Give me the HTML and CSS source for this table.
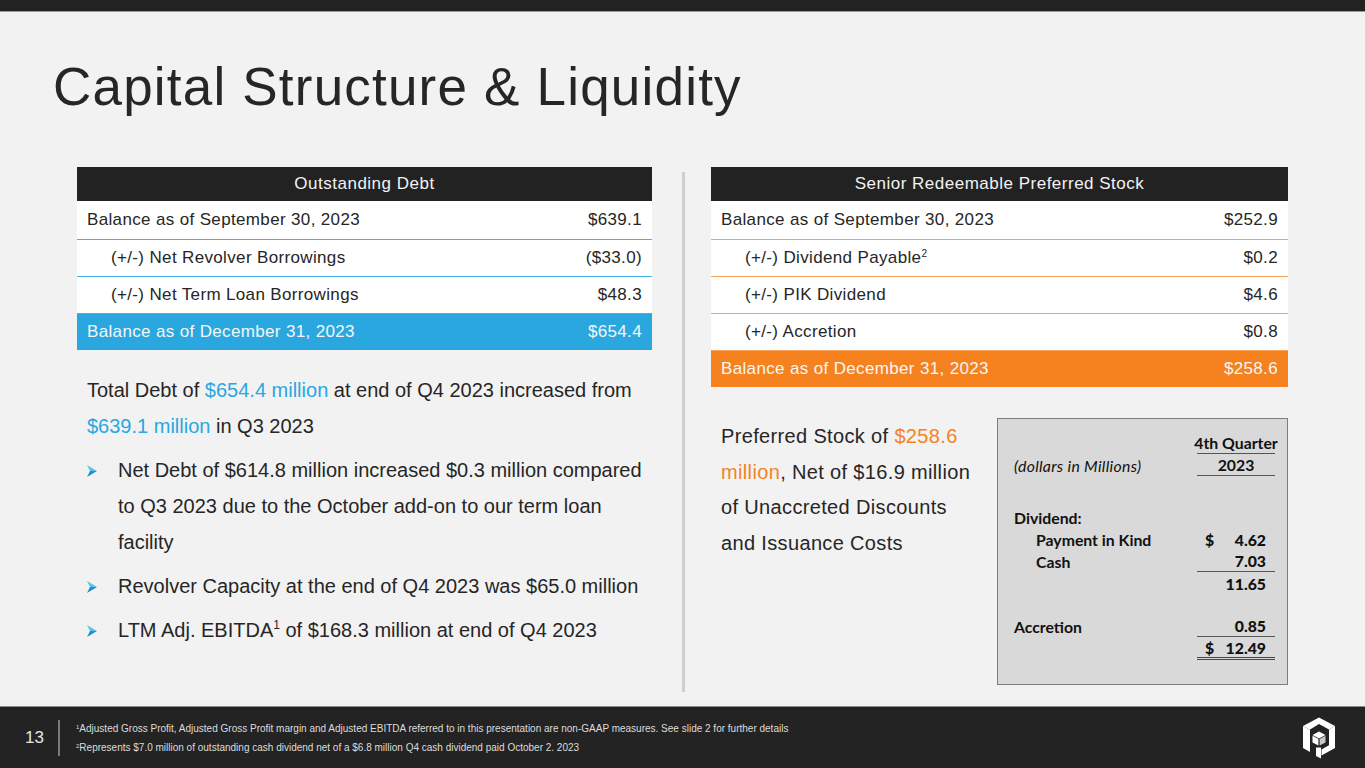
FILE: index.html
```html
<!DOCTYPE html>
<html lang="en">
<head>
<meta charset="utf-8">
<title>Capital Structure &amp; Liquidity</title>
<link rel="stylesheet" href="styles.css">
</head>
<body>
<div class="page">
  <div class="topbar"></div>
  <main class="main">
    <h1 class="title">Capital Structure &amp; Liquidity</h1>
    <div class="content">
      <section class="col col-left">
        <div class="tbl tbl-blue">
          <div class="tbl-head">Outstanding Debt</div>
          <div class="tbl-row first"><span>Balance as of September 30, 2023</span><span>$639.1</span></div>
          <div class="tbl-row ind"><span>(+/-) Net Revolver Borrowings</span><span>($33.0)</span></div>
          <div class="tbl-row ind"><span>(+/-) Net Term Loan Borrowings</span><span>$48.3</span></div>
          <div class="tbl-row total"><span>Balance as of December 31, 2023</span><span>$654.4</span></div>
        </div>
        <div class="notes">
          <p class="lead">Total Debt of <span class="blue">$654.4 million</span> at end of Q4 2023 increased from <span class="blue">$639.1 million</span> in Q3 2023</p>
          <div class="bullet">
            <svg class="arrow" viewBox="0 0 10 12" width="10" height="12"><polygon points="0,0 10,6 3,6" fill="#5cc3ee"/><polygon points="0,12 10,6 3,6" fill="#1f8fc4"/></svg>
            <p>Net Debt of $614.8 million increased $0.3 million compared to Q3 2023 due to the October add-on to our term loan facility</p>
          </div>
          <div class="bullet">
            <svg class="arrow" viewBox="0 0 10 12" width="10" height="12"><polygon points="0,0 10,6 3,6" fill="#5cc3ee"/><polygon points="0,12 10,6 3,6" fill="#1f8fc4"/></svg>
            <p>Revolver Capacity at the end of Q4 2023 was $65.0 million</p>
          </div>
          <div class="bullet">
            <svg class="arrow" viewBox="0 0 10 12" width="10" height="12"><polygon points="0,0 10,6 3,6" fill="#5cc3ee"/><polygon points="0,12 10,6 3,6" fill="#1f8fc4"/></svg>
            <p>LTM Adj. EBITDA<sup>1</sup> of $168.3 million at end of Q4 2023</p>
          </div>
        </div>
      </section>
      <div class="divider"></div>
      <section class="col col-right">
        <div class="tbl tbl-orange">
          <div class="tbl-head">Senior Redeemable Preferred Stock</div>
          <div class="tbl-row first"><span>Balance as of September 30, 2023</span><span>$252.9</span></div>
          <div class="tbl-row ind"><span>(+/-) Dividend Payable<sup>2</sup></span><span>$0.2</span></div>
          <div class="tbl-row ind"><span>(+/-) PIK Dividend</span><span>$4.6</span></div>
          <div class="tbl-row ind"><span>(+/-) Accretion</span><span>$0.8</span></div>
          <div class="tbl-row total"><span>Balance as of December 31, 2023</span><span>$258.6</span></div>
        </div>
        <div class="lower">
          <p class="pref">Preferred Stock of <span class="orange">$258.6<br>million</span>, Net of $16.9 million<br>of Unaccreted Discounts<br>and Issuance Costs</p>
          <div class="box">
            <div class="brow"><span></span><span class="num center ul">4th Quarter</span></div>
            <div class="brow"><span class="ital">(dollars in Millions)</span><span class="num center ul">2023</span></div>
            <div class="brow gap"><span>Dividend:</span><span></span></div>
            <div class="brow"><span class="sub">Payment in Kind</span><span class="num"><b>$</b><b>4.62</b></span></div>
            <div class="brow"><span class="sub">Cash</span><span class="num ul"><b></b><b>7.03</b></span></div>
            <div class="brow"><span></span><span class="num"><b></b><b>11.65</b></span></div>
            <div class="brow gap2"><span>Accretion</span><span class="num ul"><b></b><b>0.85</b></span></div>
            <div class="brow last"><span></span><span class="num dbl"><b>$</b><b>12.49</b></span></div>
          </div>
        </div>
      </section>
    </div>
  </main>
  <footer class="footer">
    <div class="pagenum">13</div>
    <div class="fsep"></div>
    <div class="fnotes">
      <p><sup>1</sup>Adjusted Gross Profit, Adjusted Gross Profit margin and Adjusted EBITDA referred to in this presentation are non-GAAP measures. See slide 2 for further details</p>
      <p><sup>2</sup>Represents $7.0 million of outstanding cash dividend net of a $6.8 million Q4 cash dividend paid October 2. 2023</p>
    </div>
    <svg class="logo" viewBox="0 0 40 42" width="40" height="42">
      <polygon points="4,9 20,0.5 36,9 30,12.5 20,7 11,12.5 11,13" fill="#fff"/>
      <polygon points="4,9 11,13 11,35 4,31" fill="#fff"/>
      <polygon points="36,9 36,31 22.5,38.5 22.5,32.5 30,28.3 30,12.5" fill="#fff"/>
      <polygon points="13.5,18 20,14.5 26.5,18 20,21.5" fill="#fff"/>
      <polygon points="13.5,18.8 19.4,22 19.4,28.6 13.5,25.4" fill="#fff"/>
      <polygon points="20.6,22 26.5,18.8 26.5,25.4 20.6,28.6" fill="#c8c8c8"/>
      <polygon points="17,30.5 22,30.5 22,41.5 17,39" fill="#fff"/>
    </svg>
  </footer>
</div>
</body>
</html>
```

FILE: styles.css
```css
* { box-sizing: border-box; }
html, body { margin: 0; padding: 0; }
body {
  font-family: "Liberation Sans", Arial, sans-serif;
  background: #f2f2f2;
  color: #262626;
}
.page {
  width: 1365px;
  height: 768px;
  display: flex;
  flex-direction: column;
  overflow: hidden;
}
.topbar {
  height: 12px;
  background: #222;
  border-bottom: 1px solid #9a9a9a;
  flex: none;
}
.main {
  flex: 1;
  display: flex;
  flex-direction: column;
}
.title {
  margin: 45px 0 0 53px;
  font-weight: normal;
  font-size: 53px;
  line-height: 60px;
  height: 60px;
  color: #262626;
  letter-spacing: 1.2px;
}
.content {
  margin-top: 50px;
  padding-left: 77px;
  display: flex;
  align-items: flex-start;
}
.col-left { width: 575px; }
.col-right { width: 577px; margin-left: 26px; }
.divider {
  width: 3px;
  height: 520px;
  margin-top: 5px;
  margin-left: 30px;
  background: #cfcfcf;
}
.tbl { font-size: 17px; letter-spacing: 0.35px; }
.tbl-head {
  height: 34px;
  background: #222;
  color: #f2f2f2;
  display: flex;
  align-items: center;
  justify-content: center;
  letter-spacing: 0.5px;
}
.tbl-row {
  height: 37px;
  background: #fff;
  display: flex;
  align-items: center;
  justify-content: space-between;
  padding: 0 10px;
  color: #262626;
}
.tbl-row.first { height: 39px; }
.tbl-row.ind { padding-left: 34px; }
.tbl-blue .tbl-row { border-bottom: 1px solid #45b0e3; }
.tbl-orange .tbl-row { border-bottom: 1px solid #f6a25a; }
.tbl-row.total { border-bottom: none; color: #f6f6f6; height: 36px; }
.tbl-blue .tbl-row.total { background: #2aa7df; }
.tbl-orange .tbl-row.total { background: #f5821f; }
.tbl sup { font-size: 10px; line-height: 0; vertical-align: 6px; }
.notes {
  padding-left: 10px;
  margin-top: 22px;
  font-size: 20px;
  line-height: 36px;
  color: #262626;
}
.notes p { margin: 0; }
.blue { color: #2aa7df; }
.orange { color: #f5821f; }
.bullet {
  display: flex;
  align-items: flex-start;
  margin-top: 8px;
}
.bullet .arrow { flex: none; margin: 13px 21px 0 0; }
.notes sup { font-size: 12px; line-height: 0; vertical-align: 8px; }
.lower {
  display: flex;
  align-items: flex-start;
  margin-top: 31px;
  padding-left: 10px;
}
.pref {
  margin: 1px 0 0 0;
  width: 277px;
  font-size: 20px;
  line-height: 35.5px;
  letter-spacing: 0.35px;
}
.box {
  width: 291px;
  height: 267px;
  background: #d9d9d9;
  border: 1px solid #7d7d7d;
  padding: 13px 12px 0 16px;
  font-family: Lato, "Open Sans", sans-serif;
  font-weight: bold;
  font-size: 15.8px;
  color: #111;
}
.brow {
  display: grid;
  grid-template-columns: 183px 78px;
  height: 22px;
  align-items: center;
}
.brow.gap { margin-top: 30px; }
.brow.gap2 { margin-top: 21px; }
.brow.last { margin-top: 1px; }
.brow .sub { padding-left: 22px; }
.ital { font-style: italic; font-weight: normal; letter-spacing: 0.3px; }
.num {
  height: 22px;
  display: flex;
  align-items: center;
  justify-content: space-between;
  padding: 0 9px 0 8px;
  white-space: nowrap;
}
.num.center { justify-content: center; padding: 0; }
.num.ul { border-bottom: 1.5px solid #555; }
.num.dbl { border-bottom: 3px double #444; }
.footer {
  height: 62px;
  flex: none;
  background: #232323;
  border-top: 1px solid #8a8a8a;
  display: flex;
  align-items: center;
  padding-left: 25px;
  color: #e6e6e6;
}
.pagenum { font-size: 17px; width: 33px; }
.fsep { width: 2px; height: 36px; background: #7a7a7a; margin-right: 16px; }
.fnotes { flex: 1; font-size: 10px; color: #dcdcdc; }
.fnotes p { margin: 0; line-height: 19px; }
.fnotes sup { font-size: 6px; vertical-align: 3px; line-height: 0; }
.logo { margin-right: 26px; }
```
